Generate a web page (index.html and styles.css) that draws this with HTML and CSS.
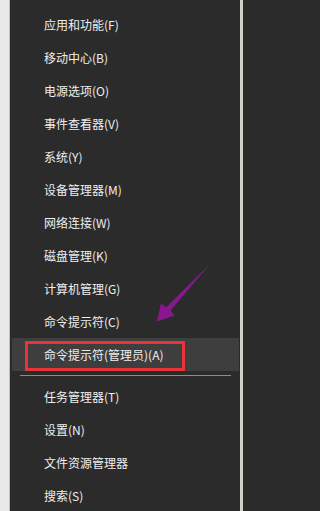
FILE: index.html
```html
<!DOCTYPE html>
<html lang="zh-CN">
<head>
<meta charset="utf-8">
<title>Win+X 菜单</title>
<link rel="stylesheet" href="styles.css">
</head>
<body>
<div class="page">
  <div class="edge-left"></div>
  <div class="menu">
    <div class="item">应用和功能(F)</div>
    <div class="item">移动中心(B)</div>
    <div class="item">电源选项(O)</div>
    <div class="item">事件查看器(V)</div>
    <div class="item">系统(Y)</div>
    <div class="item">设备管理器(M)</div>
    <div class="item">网络连接(W)</div>
    <div class="item">磁盘管理(K)</div>
    <div class="item">计算机管理(G)</div>
    <div class="item">命令提示符(C)</div>
    <div class="item active">命令提示符(管理员)(A)<span class="mark"></span></div>
    <div class="sep"></div>
    <div class="item">任务管理器(T)</div>
    <div class="item">设置(N)</div>
    <div class="item">文件资源管理器</div>
    <div class="item">搜索(S)</div>
  </div>
  <div class="edge-right"></div>
  <svg class="arrow" width="66" height="66" viewBox="0 0 66 66">
    <polygon points="60,4 20.5,50.5 24.5,55.5 7,61.5 11,43 16,47.5" fill="#8a1790"/>
  </svg>
</div>
</body>
</html>
```
FILE: styles.css
```css
html, body {
  margin: 0;
  padding: 0;
  background: #2b2b2b;
}
.page {
  position: relative;
  display: flex;
  width: 243px;
  height: 511px;
  overflow: hidden;
  font-family: "Noto Sans CJK SC", "Noto Sans", sans-serif;
}
.edge-left {
  width: 9px;
  flex: none;
  background: #e8e8e8;
  border-right: 1px solid #bdbdbd;
}
.edge-right {
  width: 3px;
  flex: none;
  background: #d2d2ca;
}
.menu {
  flex: 1;
  background: #2b2b2b;
  padding-top: 8px;
}
.item {
  position: relative;
  height: 33px;
  margin: 0 1px 0 2px;
  padding-left: 32px;
  display: flex;
  align-items: center;
  font-size: 12px;
  color: #efefef;
  white-space: nowrap;
}
.item.active {
  background: #3e3e3e;
}
.mark {
  position: absolute;
  left: 13px;
  top: 3px;
  width: 154px;
  height: 24px;
  border: 3px solid #e8343a;
}
.sep {
  height: 1px;
  margin: 4px 9px 4px 10px;
  background: #8c8c8c;
}
.arrow {
  position: absolute;
  left: 150px;
  top: 260px;
}
```
